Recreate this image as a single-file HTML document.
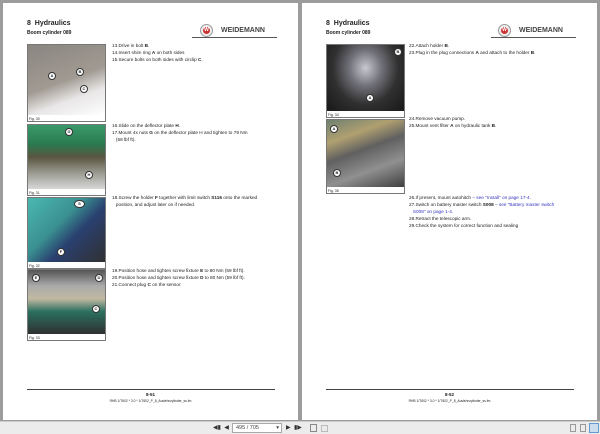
<!DOCTYPE html>
<html><head><style>
*{margin:0;padding:0;box-sizing:border-box}
body{width:600px;height:434px;background:#9c9c9c;position:relative;overflow:hidden;font-family:"Liberation Sans",sans-serif;color:#222}
.pg{position:absolute;top:3px;width:295px;height:417px;background:#fff}
.a{position:absolute;white-space:nowrap}
.h1{font-size:7px;font-weight:bold}
.h2{font-size:5px;font-weight:bold}
.t{font-size:4.7px;line-height:7px}
.img{position:absolute;border:1px solid #777;background:#fff}
.ph{position:absolute;left:0;top:0;right:0}
.cap{position:absolute;left:1px;bottom:0;font-size:3.5px}
.c{position:absolute;width:8px;height:8px;border-radius:50%;background:#fff;border:1px solid #333;font-size:4px;font-weight:bold;text-align:center;line-height:6px}
.lnk{color:#3535c0}
#tb{position:absolute;left:0;top:421px;width:600px;height:13px;background:#ececec;border-top:1px solid #ccc}
</style></head><body>
<div class="pg" style="left:3px">
 <div class="a h1" style="left:24px;top:17px">8 &nbsp;Hydraulics</div>
 <div class="a h2" style="left:24px;top:27px">Boom cylinder 089</div>
 <div class="a" style="left:197px;top:21px;width:13px;height:13px;border-radius:50%;border:1px solid #999;background:#eee"><div style="position:absolute;left:2px;top:2px;width:7px;height:7px;border-radius:50%;background:#c33;color:#fff;font-size:5px;font-weight:bold;text-align:center;line-height:7px">W</div></div>
 <div class="a" style="left:218px;top:24px;font-size:7px;font-weight:bold;color:#444">WEIDEMANN</div>
 <div class="a" style="left:189px;top:34px;width:85px;height:1px;background:#555"></div>
 <div class="img" style="left:24px;top:41px;width:79px;height:78px"><div class="ph" style="height:70px;background:linear-gradient(160deg,#8a8580 0%,#a09a92 50%,#e8e6e6 72%,#fff 100%)"></div><div class="cap">Fig. 30</div>
  <div class="c" style="left:20px;top:27px">A</div><div class="c" style="left:48px;top:23px">B</div><div class="c" style="left:52px;top:40px">C</div></div>
 <div class="img" style="left:24px;top:121px;width:79px;height:72px"><div class="ph" style="height:64px;background:linear-gradient(180deg,#3a9a6a 0%,#2a7a50 30%,#5a5540 50%,#9a9a90 75%,#d8d8d8 100%)"></div><div class="cap">Fig. 31</div>
  <div class="c" style="left:37px;top:3px">G</div><div class="c" style="left:57px;top:46px">H</div></div>
 <div class="img" style="left:24px;top:194px;width:79px;height:72px"><div class="ph" style="height:64px;background:linear-gradient(135deg,#4ab8b0 0%,#3a9090 40%,#2a4070 60%,#303030 100%)"></div><div class="cap">Fig. 32</div>
  <div class="c" style="left:46px;top:2px;width:11px">S</div><div class="c" style="left:29px;top:50px">F</div></div>
 <div class="img" style="left:24px;top:266px;width:79px;height:72px"><div class="ph" style="height:64px;background:linear-gradient(180deg,#555 0%,#aaa 25%,#c0b8a0 45%,#2a7060 65%,#303030 100%)"></div><div class="cap">Fig. 33</div>
  <div class="c" style="left:4px;top:4px">E</div><div class="c" style="left:67px;top:4px">D</div><div class="c" style="left:64px;top:35px">C</div></div>
 <div class="a t" style="left:109px;top:39px">13.Drive in bolt <b>B</b>.<br>14.Insert shim ring <b>A</b> on both sides<br>15.Secure bolts on both sides with circlip <b>C</b>.</div>
 <div class="a t" style="left:109px;top:119px">16.Slide on the deflector plate <b>H</b>.<br>17.Mount 4x nuts <b>G</b> on the deflector plate H and tighten to 79 Nm<br>&nbsp;&nbsp;&nbsp;(58 lbf ft).</div>
 <div class="a t" style="left:109px;top:191px">18.Screw the holder <b>F</b> together with limit switch <b>S116</b> onto the marked<br>&nbsp;&nbsp;&nbsp;position, and adjust later on if needed.</div>
 <div class="a t" style="left:109px;top:264px">19.Position hose and tighten screw fixture <b>E</b> to 80 Nm (59 lbf ft).<br>20.Position hose and tighten screw fixture <b>D</b> to 80 Nm (59 lbf ft).<br>21.Connect plug <b>C</b> on the sensor.</div>
 <div class="a" style="left:24px;top:386px;width:248px;height:1px;background:#444"></div>
 <div class="a" style="left:0;width:295px;top:389px;text-align:center;font-size:4.5px;font-weight:bold">8-51</div>
 <div class="a" style="left:0;width:295px;top:396px;text-align:center;font-size:3.3px">RHB 1/T602 * 3.0 * 1/T602_P_8_Auslehnzylinder_ss.fm</div>
</div>
<div class="pg" style="left:302px">
 <div class="a h1" style="left:24px;top:17px">8 &nbsp;Hydraulics</div>
 <div class="a h2" style="left:24px;top:27px">Boom cylinder 089</div>
 <div class="a" style="left:196px;top:21px;width:13px;height:13px;border-radius:50%;border:1px solid #999;background:#eee"><div style="position:absolute;left:2px;top:2px;width:7px;height:7px;border-radius:50%;background:#c33;color:#fff;font-size:5px;font-weight:bold;text-align:center;line-height:7px">W</div></div>
 <div class="a" style="left:217px;top:24px;font-size:7px;font-weight:bold;color:#444">WEIDEMANN</div>
 <div class="a" style="left:189px;top:34px;width:85px;height:1px;background:#555"></div>
 <div class="img" style="left:24px;top:41px;width:79px;height:74px"><div class="ph" style="height:66px;background:radial-gradient(ellipse at 50% 35%,#c8c8d0 0%,#707078 30%,#303030 60%,#181818 100%)"></div><div class="cap">Fig. 34</div>
  <div class="c" style="left:67px;top:3px">B</div><div class="c" style="left:39px;top:49px">A</div></div>
 <div class="img" style="left:24px;top:116px;width:79px;height:75px"><div class="ph" style="height:67px;background:linear-gradient(160deg,#708070 0%,#b0a070 25%,#606060 45%,#909090 70%,#404040 100%)"></div><div class="cap">Fig. 35</div>
  <div class="c" style="left:3px;top:5px">A</div><div class="c" style="left:6px;top:49px">B</div></div>
 <div class="a t" style="left:107px;top:39px">22.Attach holder <b>B</b>.<br>23.Plug in the plug connections <b>A</b> and attach to the holder <b>B</b>.</div>
 <div class="a t" style="left:107px;top:112px">24.Remove vacuum pump.<br>25.Mount vent filter <b>A</b> on hydraulic tank <b>B</b>.</div>
 <div class="a t" style="left:107px;top:191px">26.If present, mount autohitch <span class="lnk">– see "Install" on page 17-4.</span><br>27.Switch on battery master switch <b>S008</b> <span class="lnk">– see "Battery master switch<br>&nbsp;&nbsp;&nbsp;S008" on page 1-4.</span><br>28.Retract the telescopic arm.<br>29.Check the system for correct function and sealing</div>
 <div class="a" style="left:24px;top:386px;width:248px;height:1px;background:#444"></div>
 <div class="a" style="left:0;width:295px;top:389px;text-align:center;font-size:4.5px;font-weight:bold">8-52</div>
 <div class="a" style="left:0;width:295px;top:396px;text-align:center;font-size:3.3px">RHB 1/T602 * 3.0 * 1/T602_P_8_Auslehnzylinder_ss.fm</div>
</div>
<div id="tb">
 <div class="a" style="left:213px;top:2px;font-size:6px;color:#333">◀▮ &nbsp;◀</div>
 <div class="a" style="left:232px;top:1px;width:50px;height:10px;background:#fff;border:1px solid #aaa;font-size:5.5px;line-height:8px;padding-left:3px;color:#444">495 / 705 <span style="float:right;padding-right:2px">▾</span></div>
 <div class="a" style="left:286px;top:2px;font-size:6px;color:#333">▶ &nbsp;▮▶</div>
 <div class="a" style="left:310px;top:2px;width:7px;height:8px;border:1px solid #888"></div>
 <div class="a" style="left:321px;top:3px;width:7px;height:7px;border:1px solid #bbb"></div>
 <div class="a" style="left:570px;top:2px;width:6px;height:8px;border:1px solid #999"></div>
 <div class="a" style="left:580px;top:2px;width:6px;height:8px;border:1px solid #999"></div>
 <div class="a" style="left:589px;top:1px;width:10px;height:10px;border:1px solid #69c;background:#cde"></div>
</div>
</body></html>
